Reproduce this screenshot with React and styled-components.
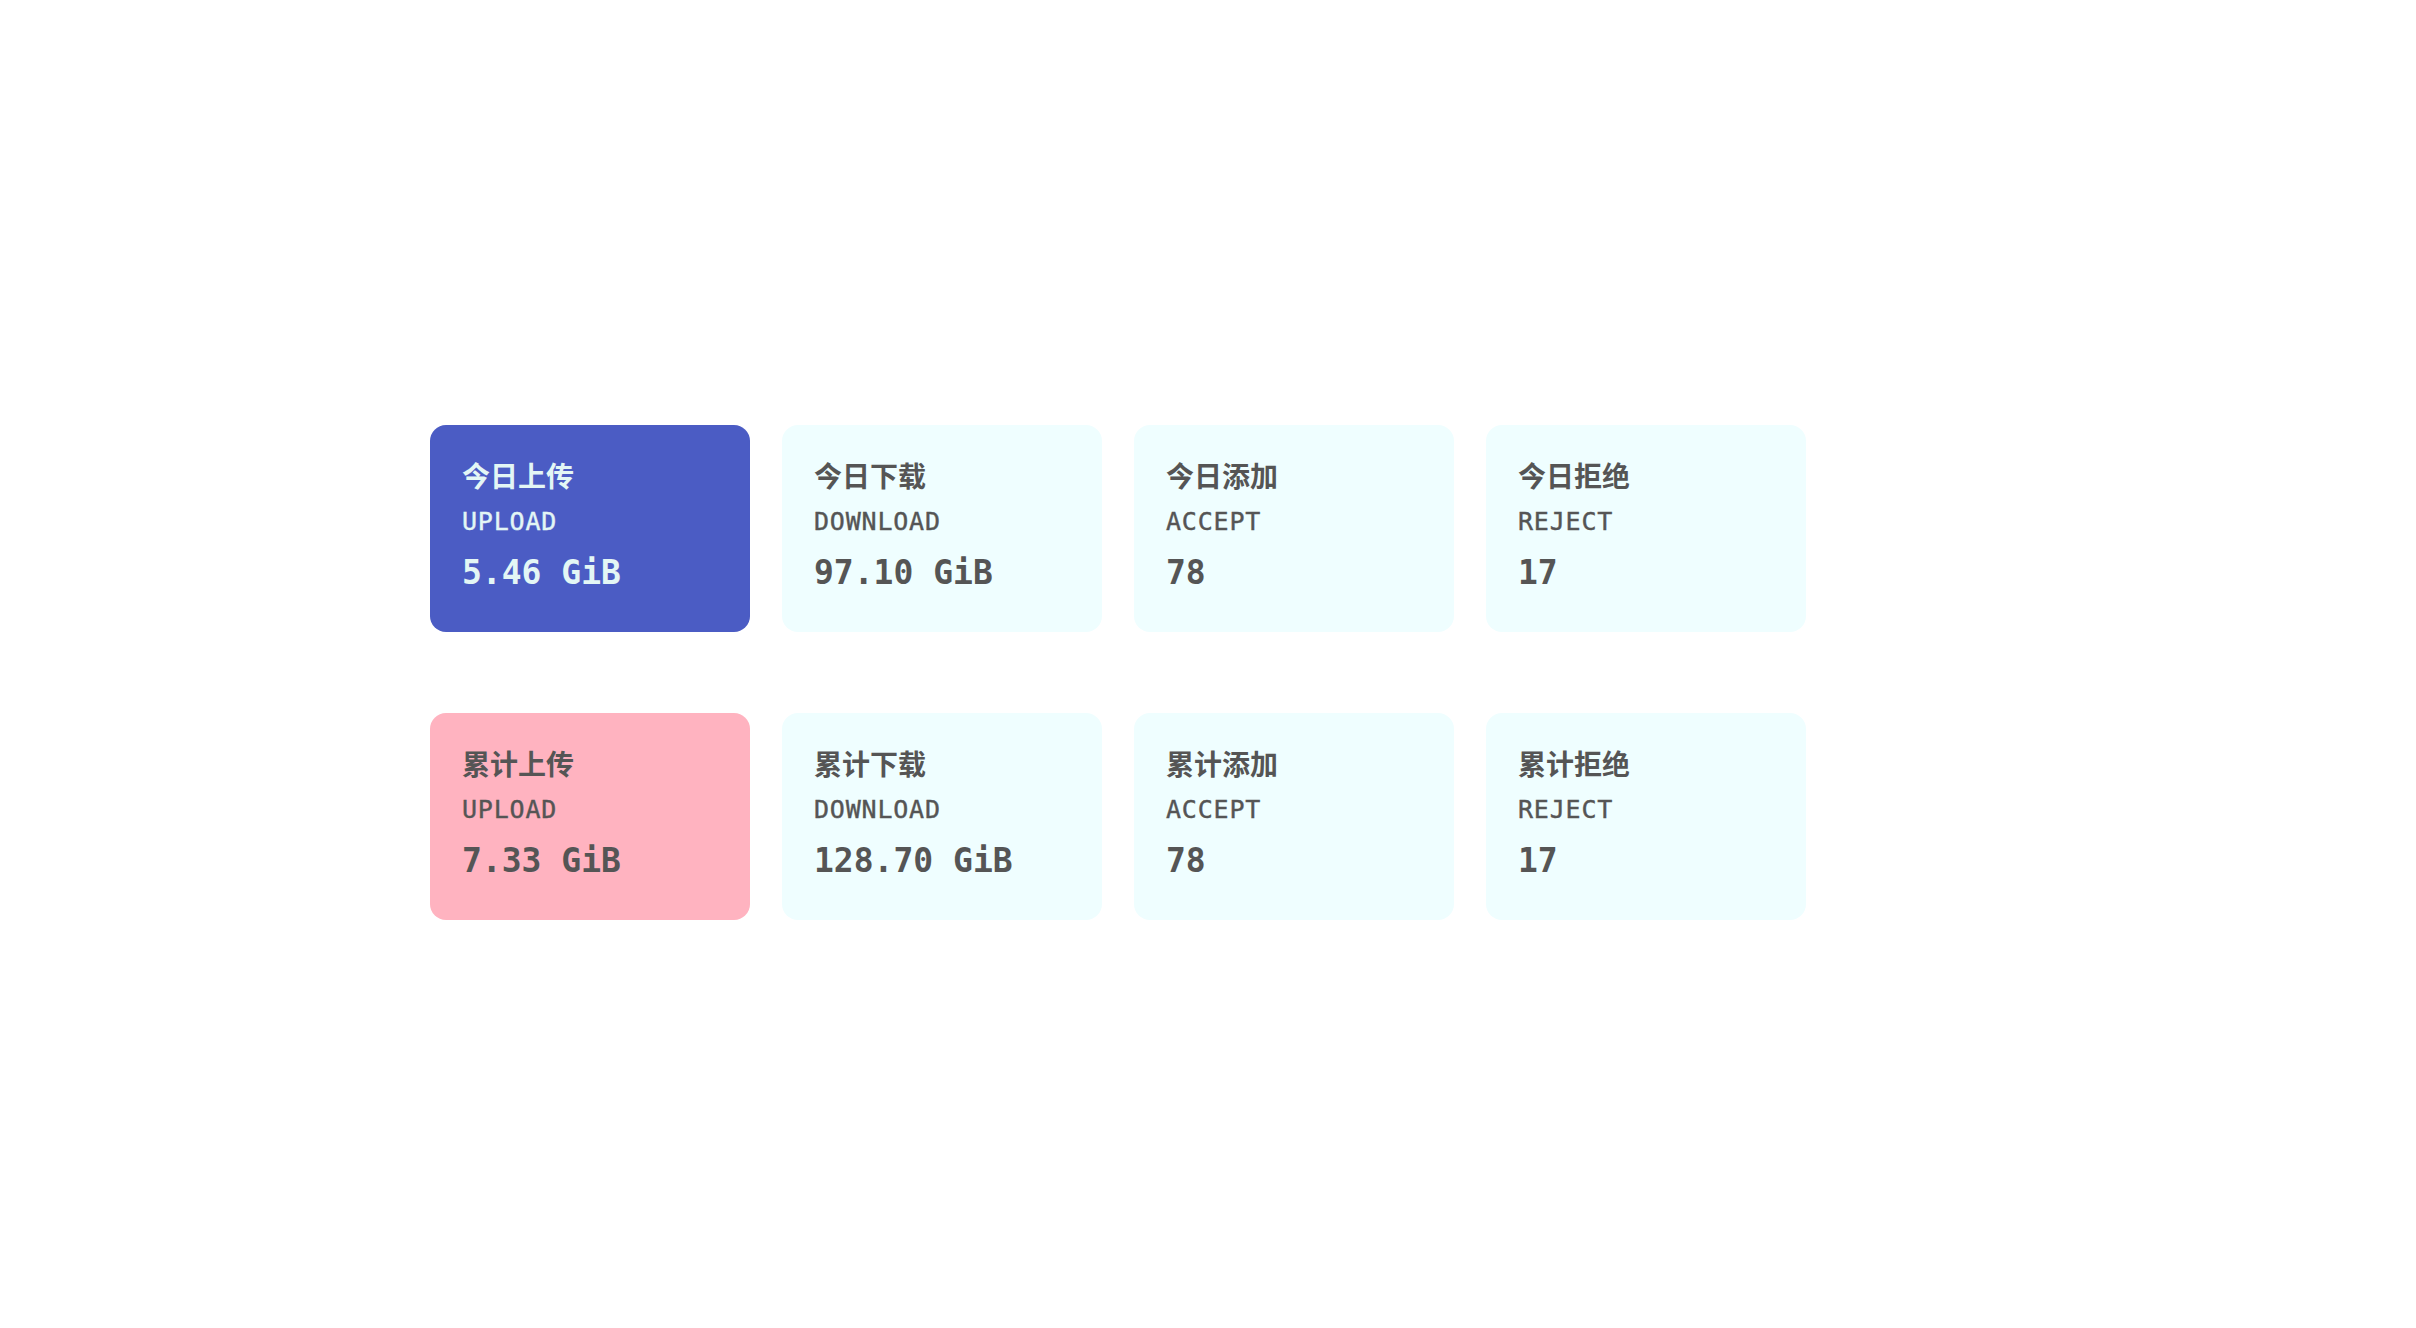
import * as React from 'react'
import styled, { createGlobalStyle } from 'styled-components'

const GlobalStyle = createGlobalStyle`
    html, body {
        margin: 0;
        padding: 0;
        background-color: #ffffff;
    }
`

const Page = styled.div`
    box-sizing: border-box;
    display: flex;
    flex-flow: column;
    gap: 81px;
    min-height: 1328px;
    padding: 425px 0 0 430px;
`

const Row = styled.div`
    display: grid;
    gap: 32px;
    grid-template-columns: repeat(4, 320px);
`

const tones = {
    blue: { background: '#4b5cc4', color: '#e3f6f5' },
    pink: { background: '#ffb3c0', color: '#555555' },
    plain: { background: '#effeff', color: '#555555' },
}

const Card = styled.div`
    background-color: ${(props) => tones[props.$tone].background};
    border-radius: 16px;
    box-sizing: border-box;
    color: ${(props) => tones[props.$tone].color};
    display: flex;
    flex-flow: column;
    font-family: 'DejaVu Sans Mono', 'Noto Sans CJK SC', monospace;
    height: 207px;
    padding: 30px 32px 0;
`

const Title = styled.div`
    font-family: 'Noto Sans CJK SC', 'Noto Sans', sans-serif;
    font-size: 28px;
    font-weight: 700;
    line-height: 40px;
`

const Label = styled.div`
    font-size: 25px;
    font-weight: 400;
    letter-spacing: 0.8px;
    line-height: 30px;
    margin-top: 12px;
    -webkit-text-stroke: 0.4px currentColor;
`

const Value = styled.div`
    font-size: 33px;
    font-weight: 700;
    line-height: 40px;
    margin-top: 16px;
`

const rows = [
    [
        { tone: 'blue', title: '今日上传', label: 'UPLOAD', value: '5.46 GiB' },
        { tone: 'plain', title: '今日下载', label: 'DOWNLOAD', value: '97.10 GiB' },
        { tone: 'plain', title: '今日添加', label: 'ACCEPT', value: '78' },
        { tone: 'plain', title: '今日拒绝', label: 'REJECT', value: '17' },
    ],
    [
        { tone: 'pink', title: '累计上传', label: 'UPLOAD', value: '7.33 GiB' },
        { tone: 'plain', title: '累计下载', label: 'DOWNLOAD', value: '128.70 GiB' },
        { tone: 'plain', title: '累计添加', label: 'ACCEPT', value: '78' },
        { tone: 'plain', title: '累计拒绝', label: 'REJECT', value: '17' },
    ],
]

const App = () => {
    return (
        <Page>
            <GlobalStyle />
            {rows.map((row, index) => (
                <Row key={index}>
                    {row.map((item) => (
                        <Card key={item.title} $tone={item.tone}>
                            <Title>{item.title}</Title>
                            <Label>{item.label}</Label>
                            <Value>{item.value}</Value>
                        </Card>
                    ))}
                </Row>
            ))}
        </Page>
    )
}

export default App
